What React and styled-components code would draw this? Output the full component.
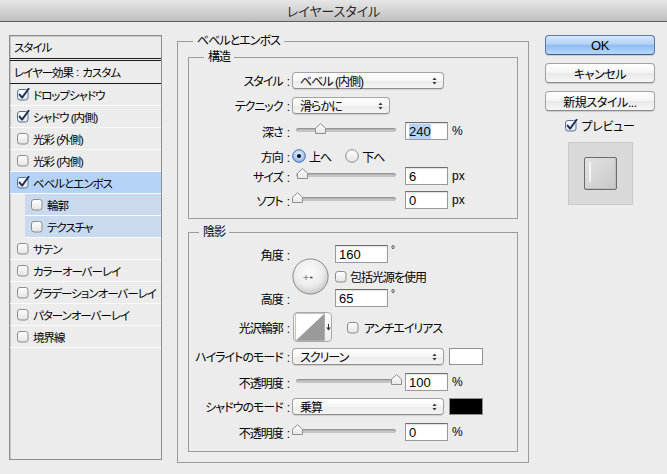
import styled, { createGlobalStyle } from "styled-components";

const GlobalStyle = createGlobalStyle`
  html, body {
    margin: 0;
    padding: 0;
    background: #ececec;
  }
  body {
    font-family: "Liberation Sans", "Noto Sans CJK JP", sans-serif;
    font-size: 12px;
    color: #000;
    font-feature-settings: "palt";
    letter-spacing: -1px;
  }
`;

const Window = styled.div`
  width: 667px;
  height: 474px;
  overflow: hidden;
  background: #ececec;
  display: flex;
  flex-direction: column;
`;

const TitleBar = styled.div`
  height: 21px;
  flex: none;
  border-bottom: 1px solid #5c5c5c;
  background: linear-gradient(#e6e6e6, #d2d2d2 55%, #bebebe);
  display: flex;
  align-items: center;
  justify-content: center;
  font-size: 13px;
  letter-spacing: 0;
  color: #2a2a2a;
`;

const Body = styled.div`
  display: flex;
  align-items: flex-start;
  padding: 12px 0 0 9px;
`;

/* ---------- left list ---------- */

const StylePanel = styled.div`
  margin-top: 1px;
  width: 153px;
  height: 425px;
  box-sizing: border-box;
  border: 1px solid #8d8d8d;
  box-shadow: inset 1px 1px 0 #c6c6c6;
  display: flex;
  flex-direction: column;
  font-size: 11.5px;
`;

const PanelHead = styled.div`
  height: 22px;
  flex: none;
  display: flex;
  align-items: center;
  padding-left: 4px;
  white-space: pre;
  border-bottom: ${(p) => (p.$double ? "3px double #1a1a1a" : "1px solid #1a1a1a")};
`;

const Sep = styled.span`
  margin: 0 3px;
  letter-spacing: 0;
`;

const StyleItem = styled.div`
  height: 21px;
  flex: none;
  display: flex;
  align-items: center;
  gap: 3px;
  margin-left: ${(p) => (p.$sub ? 15 : 0)}px;
  padding-left: ${(p) => (p.$sub ? 6 : 7)}px;
  border-bottom: 1px solid #fbfbfb;
  background: ${(p) => (p.$selected ? "#b5d3f9" : p.$sub ? "#c9d9ee" : "transparent")};
  white-space: nowrap;
`;

/* ---------- center ---------- */

const Group = styled.fieldset`
  margin: 0 0 0 15px;
  width: 352px;
  min-width: 0;
  box-sizing: border-box;
  padding: 2px 10px 10px;
  border: 1px solid #9b9b9b;
`;

const SubGroup = styled.fieldset`
  margin: ${(p) => p.$mt || 0}px 0 0 0;
  min-width: 0;
  padding: ${(p) => p.$pt}px 0 ${(p) => p.$pb}px 0;
  border: 1px solid #9b9b9b;
`;

const Legend = styled.legend`
  margin-left: ${(p) => p.$indent}px;
  padding: 0 4px;
  line-height: 14px;
  font-size: 12px;
`;

const Row = styled.div`
  display: flex;
  align-items: center;
  height: ${(p) => p.$h || 18}px;
  margin-top: ${(p) => p.$mt || 0}px;
`;

const LabelBox = styled.div`
  width: 101px;
  margin-right: 2px;
  flex: none;
  text-align: right;
  white-space: nowrap;
`;

const Colon = styled.span`
  margin-left: 4px;
  letter-spacing: 0;
`;

const Label = ({ children }) => (
  <LabelBox>
    {children}
    <Colon>:</Colon>
  </LabelBox>
);

const Select = styled.div`
  width: ${(p) => p.$w}px;
  height: 17px;
  box-sizing: border-box;
  border: 1px solid #a3a3a3;
  border-bottom-color: #8e8e8e;
  border-radius: 4px;
  background: linear-gradient(#ffffff, #f6f6f6 50%, #ebebeb 51%, #f4f4f4);
  box-shadow: 0 1px 1px rgba(0, 0, 0, 0.12);
  display: flex;
  align-items: center;
  justify-content: space-between;
  padding: 0 6px 0 7px;
  flex: none;
`;

const Slider = styled.div`
  position: relative;
  width: 100px;
  height: 4px;
  flex: none;
  margin: 0 9px 3px 4px;
  border-radius: 3px;
  background: linear-gradient(#9a9a9a, #c4c4c4 60%, #dadada);
  box-shadow: inset 0 0 0 1px rgba(0, 0, 0, 0.08);
`;

const ThumbWrap = styled.div`
  position: absolute;
  left: ${(p) => p.$left}px;
  bottom: -2px;
  width: 11px;
  height: 11px;
  display: flex;
`;

const Field = styled.div`
  width: ${(p) => p.$w || 43}px;
  height: 18px;
  flex: none;
  box-sizing: border-box;
  border: 1px solid #9a9a9a;
  border-top-color: #6e6e6e;
  background: #fff;
  box-shadow: inset 0 1px 1px rgba(0, 0, 0, 0.12);
  padding-left: 3px;
  display: flex;
  align-items: center;
  font-size: 13px;
  letter-spacing: 0;
`;

const Highlighted = styled.span`
  background: #b3d3fd;
`;

const Unit = styled.span`
  margin-left: 4px;
  font-size: 12px;
  letter-spacing: 0;
`;

const Degree = styled.span`
  margin-left: 3px;
  align-self: flex-start;
  font-size: 10px;
  line-height: 10px;
`;

const RadioOption = styled.div`
  display: flex;
  align-items: center;
  gap: 3px;
  margin-right: ${(p) => p.$mr || 0}px;
`;

const AngleBlock = styled.div`
  display: grid;
  grid-template-columns: 103px 43px auto;
  grid-template-rows: 18px 18px 18px;
  row-gap: 4px;
`;

const Dial = styled.div`
  grid-column: 2;
  grid-row: 1 / 4;
  align-self: center;
  display: flex;
`;

const Cell = styled.div`
  display: flex;
  align-items: center;
  gap: ${(p) => p.$gap || 0}px;
  grid-column: ${(p) => p.$col};
  grid-row: ${(p) => p.$row};
`;

const Contour = styled.div`
  width: 39px;
  height: 30px;
  margin-left: 1px;
  box-sizing: border-box;
  border: 1px solid #aaaaaa;
  border-radius: 4px;
  background: linear-gradient(#fdfdfd, #ececec);
  display: flex;
  align-items: center;
  gap: 1px;
  padding-left: 1px;
  flex: none;
`;

const CheckLabel = styled.div`
  display: flex;
  align-items: center;
  gap: ${(p) => p.$gap || 2}px;
  margin-left: ${(p) => p.$ml || 0}px;
  white-space: nowrap;
`;

const Swatch = styled.div`
  width: 34px;
  height: 17px;
  box-sizing: border-box;
  margin-left: 5px;
  border: 1px solid #8f8f8f;
  background: ${(p) => p.$color};
  flex: none;
`;

/* ---------- right ---------- */

const Side = styled.div`
  margin: 1px 0 0 16px;
  width: 110px;
  display: flex;
  flex-direction: column;
  align-items: center;
`;

const Button = styled.div`
  width: 110px;
  height: 20px;
  box-sizing: border-box;
  margin-top: ${(p) => p.$mt || 0}px;
  border-radius: 4px;
  border: 1px solid ${(p) => (p.$primary ? "#5779b0" : "#a2a2a2")};
  border-bottom-color: ${(p) => (p.$primary ? "#3f5f94" : "#8a8a8a")};
  background: ${(p) =>
    p.$primary
      ? "linear-gradient(#d7e8fc, #b2d2f7 45%, #8fbcf2 52%, #b7d8fb)"
      : "linear-gradient(#ffffff, #f5f5f5 48%, #e9e9e9 52%, #f6f6f6)"};
  box-shadow: 0 1px 1px rgba(0, 0, 0, 0.15);
  display: flex;
  align-items: center;
  justify-content: center;
  font-size: ${(p) => (p.$primary ? 13 : 12)}px;
  letter-spacing: -0.4px;
  white-space: nowrap;
`;

const PreviewToggle = styled.div`
  margin-top: 7px;
  height: 14px;
  display: flex;
  align-items: center;
  gap: 3px;
  font-size: 12px;
  letter-spacing: -0.3px;
`;

const PreviewBox = styled.div`
  margin-top: 10px;
  width: 65px;
  height: 63px;
  box-sizing: border-box;
  border: 1px solid #c9c9c9;
  background: #d9d9d9;
  display: flex;
  align-items: center;
  justify-content: center;
`;

const PreviewSwatch = styled.div`
  width: 33px;
  height: 33px;
  box-sizing: border-box;
  border: 1px solid #6c6c6c;
  border-radius: 2px;
  background: linear-gradient(135deg, #e2e2e2, #d3d3d3 60%, #c8c8c8);
  box-shadow: inset -1px -1px 0 #bdbdbd;
  padding: 4px 0 0 4px;
`;

const PreviewShine = styled.div`
  width: 2px;
  height: 20px;
  background: #f4f4f4;
`;

/* ---------- drawings ---------- */

const CheckBox = ({ checked }) => (
  <svg width="13" height="13" viewBox="0 0 13 13" style={{ flex: "none" }}>
    <defs>
      <linearGradient id="cbOff" x1="0" y1="0" x2="0" y2="1">
        <stop offset="0" stopColor="#ffffff" />
        <stop offset="1" stopColor="#e3e3e3" />
      </linearGradient>
    </defs>
    <rect
      x="0.5"
      y="1.5"
      width="10.5"
      height="10.5"
      rx="2.5"
      fill="url(#cbOff)"
      stroke={checked ? "#56709a" : "#8c8c8c"}
    />
    {checked && (
      <path
        d="M2.6 6.6 L5.1 9.6 L11.6 0.8"
        stroke="#1c2f5a"
        strokeWidth="1.9"
        fill="none"
        strokeLinecap="round"
        strokeLinejoin="round"
      />
    )}
  </svg>
);

const Radio = ({ on }) => (
  <svg width="14" height="14" viewBox="0 0 14 14" style={{ flex: "none" }}>
    <defs>
      <radialGradient id="radOn" cx="0.5" cy="0.35" r="0.7">
        <stop offset="0" stopColor="#e4f0fd" />
        <stop offset="0.6" stopColor="#a9ccf4" />
        <stop offset="1" stopColor="#6d9ee0" />
      </radialGradient>
      <linearGradient id="radOff" x1="0" y1="0" x2="0" y2="1">
        <stop offset="0" stopColor="#ffffff" />
        <stop offset="1" stopColor="#e4e4e4" />
      </linearGradient>
    </defs>
    <circle
      cx="7"
      cy="7"
      r="6.3"
      fill={on ? "url(#radOn)" : "url(#radOff)"}
      stroke={on ? "#4b6fa6" : "#8c8c8c"}
    />
    {on && <circle cx="7" cy="7" r="2.1" fill="#111" />}
  </svg>
);

const UpDown = () => (
  <svg width="5" height="8" viewBox="0 0 5 8">
    <path d="M2.5 0.5 L4.6 3 H0.4 Z M2.5 7.5 L4.6 5 H0.4 Z" fill="#3a3a3a" />
  </svg>
);

const Thumb = () => (
  <svg width="11" height="11" viewBox="0 0 11 11">
    <defs>
      <linearGradient id="thumbG" x1="0" y1="0" x2="0" y2="1">
        <stop offset="0" stopColor="#ffffff" />
        <stop offset="1" stopColor="#e6e6e6" />
      </linearGradient>
    </defs>
    <path d="M0.5 10.5 V5.2 L5.5 0.7 L10.5 5.2 V10.5 Z" fill="url(#thumbG)" stroke="#8f8f8f" />
  </svg>
);

const AngleDial = () => (
  <svg width="37" height="37" viewBox="0 0 37 37">
    <defs>
      <radialGradient id="dialG" cx="0.45" cy="0.38" r="0.62">
        <stop offset="0" stopColor="#fcfcfc" />
        <stop offset="0.65" stopColor="#ececec" />
        <stop offset="1" stopColor="#c9c9c9" />
      </radialGradient>
    </defs>
    <circle cx="18.5" cy="18.5" r="17.6" fill="url(#dialG)" stroke="#8a8a8a" />
    <path d="M11.5 19.5 h5 M14 17 v5" stroke="#8a8a8a" strokeWidth="1" />
    <path d="M18 19.5 h2.5" stroke="#4a4a4a" strokeWidth="1.6" />
  </svg>
);

const ContourCurve = () => (
  <svg width="30" height="28" viewBox="0 0 30 28">
    <rect x="0.5" y="0.5" width="29" height="27" fill="#fff" stroke="#c4c4c4" />
    <path d="M1 27.5 L29.5 0.5 V27.5 Z" fill="#9a9a9a" />
  </svg>
);

const MiniArrow = () => (
  <svg width="5" height="9" viewBox="0 0 5 9">
    <path d="M2.5 1 V5" stroke="#333" strokeWidth="1" />
    <path d="M0.3 4.5 H4.7 L2.5 7.5 Z" fill="#333" />
  </svg>
);

const Slide = ({ left }) => (
  <Slider>
    <ThumbWrap $left={left}>
      <Thumb />
    </ThumbWrap>
  </Slider>
);

const effects = [
  { label: "ドロップシャドウ", checked: true },
  { label: "シャドウ (内側)", checked: true },
  { label: "光彩 (外側)" },
  { label: "光彩 (内側)" },
  { label: "ベベルとエンボス", checked: true, selected: true },
  { label: "輪郭", sub: true },
  { label: "テクスチャ", sub: true },
  { label: "サテン" },
  { label: "カラーオーバーレイ" },
  { label: "グラデーションオーバーレイ" },
  { label: "パターンオーバーレイ" },
  { label: "境界線" },
];

export default function App() {
  return (
    <>
      <GlobalStyle />
      <Window>
        <TitleBar>レイヤースタイル</TitleBar>
        <Body>
          <StylePanel>
            <PanelHead $double>スタイル</PanelHead>
            <PanelHead>
              レイヤー効果<Sep>:</Sep>カスタム
            </PanelHead>
            {effects.map((e) => (
              <StyleItem key={e.label} $sub={e.sub} $selected={e.selected}>
                <CheckBox checked={e.checked} />
                <span>{e.label}</span>
              </StyleItem>
            ))}
          </StylePanel>

          <Group>
            <Legend $indent={5}>ベベルとエンボス</Legend>

            <SubGroup $pt={8} $pb={9}>
              <Legend $indent={15}>構造</Legend>
              <Row $h={17}>
                <Label>スタイル</Label>
                <Select $w={152}>
                  <span>ベベル (内側)</span>
                  <UpDown />
                </Select>
              </Row>
              <Row $h={17} $mt={8}>
                <Label>テクニック</Label>
                <Select $w={98}>
                  <span>滑らかに</span>
                  <UpDown />
                </Select>
              </Row>
              <Row $mt={8}>
                <Label>深さ</Label>
                <Slide left={19} />
                <Field>
                  <Highlighted>240</Highlighted>
                </Field>
                <Unit>%</Unit>
              </Row>
              <Row $h={14} $mt={9}>
                <Label>方向</Label>
                <RadioOption $mr={14}>
                  <Radio on />
                  <span>上へ</span>
                </RadioOption>
                <RadioOption>
                  <Radio />
                  <span>下へ</span>
                </RadioOption>
              </Row>
              <Row $mt={4}>
                <Label>サイズ</Label>
                <Slide left={1} />
                <Field>6</Field>
                <Unit>px</Unit>
              </Row>
              <Row $mt={6}>
                <Label>ソフト</Label>
                <Slide left={-4} />
                <Field>0</Field>
                <Unit>px</Unit>
              </Row>
            </SubGroup>

            <SubGroup $mt={6} $pt={6} $pb={10}>
              <Legend $indent={10}>陰影</Legend>
              <AngleBlock>
                <Cell $col={1} $row={1}>
                  <Label>角度</Label>
                </Cell>
                <Dial>
                  <AngleDial />
                </Dial>
                <Cell $col={3} $row={1}>
                  <Field $w={53}>160</Field>
                  <Degree>°</Degree>
                </Cell>
                <Cell $col={3} $row={2} $gap={2}>
                  <CheckBox />
                  <span>包括光源を使用</span>
                </Cell>
                <Cell $col={1} $row={3}>
                  <Label>高度</Label>
                </Cell>
                <Cell $col={3} $row={3}>
                  <Field $w={53}>65</Field>
                  <Degree>°</Degree>
                </Cell>
              </AngleBlock>
              <Row $h={30} $mt={5}>
                <Label>光沢輪郭</Label>
                <Contour>
                  <ContourCurve />
                  <MiniArrow />
                </Contour>
                <CheckLabel $ml={15} $gap={4}>
                  <CheckBox />
                  <span>アンチエイリアス</span>
                </CheckLabel>
              </Row>
              <Row $h={17} $mt={6}>
                <Label>ハイライトのモード</Label>
                <Select $w={152}>
                  <span>スクリーン</span>
                  <UpDown />
                </Select>
                <Swatch $color="#ffffff" />
              </Row>
              <Row $mt={8}>
                <Label>不透明度</Label>
                <Slide left={95} />
                <Field>100</Field>
                <Unit>%</Unit>
              </Row>
              <Row $h={17} $mt={7}>
                <Label>シャドウのモード</Label>
                <Select $w={152}>
                  <span>乗算</span>
                  <UpDown />
                </Select>
                <Swatch $color="#000000" />
              </Row>
              <Row $mt={8}>
                <Label>不透明度</Label>
                <Slide left={-4} />
                <Field>0</Field>
                <Unit>%</Unit>
              </Row>
            </SubGroup>
          </Group>

          <Side>
            <Button $primary>OK</Button>
            <Button $mt={8}>キャンセル</Button>
            <Button $mt={8}>新規スタイル...</Button>
            <PreviewToggle>
              <CheckBox checked />
              <span>プレビュー</span>
            </PreviewToggle>
            <PreviewBox>
              <PreviewSwatch>
                <PreviewShine />
              </PreviewSwatch>
            </PreviewBox>
          </Side>
        </Body>
      </Window>
    </>
  );
}
